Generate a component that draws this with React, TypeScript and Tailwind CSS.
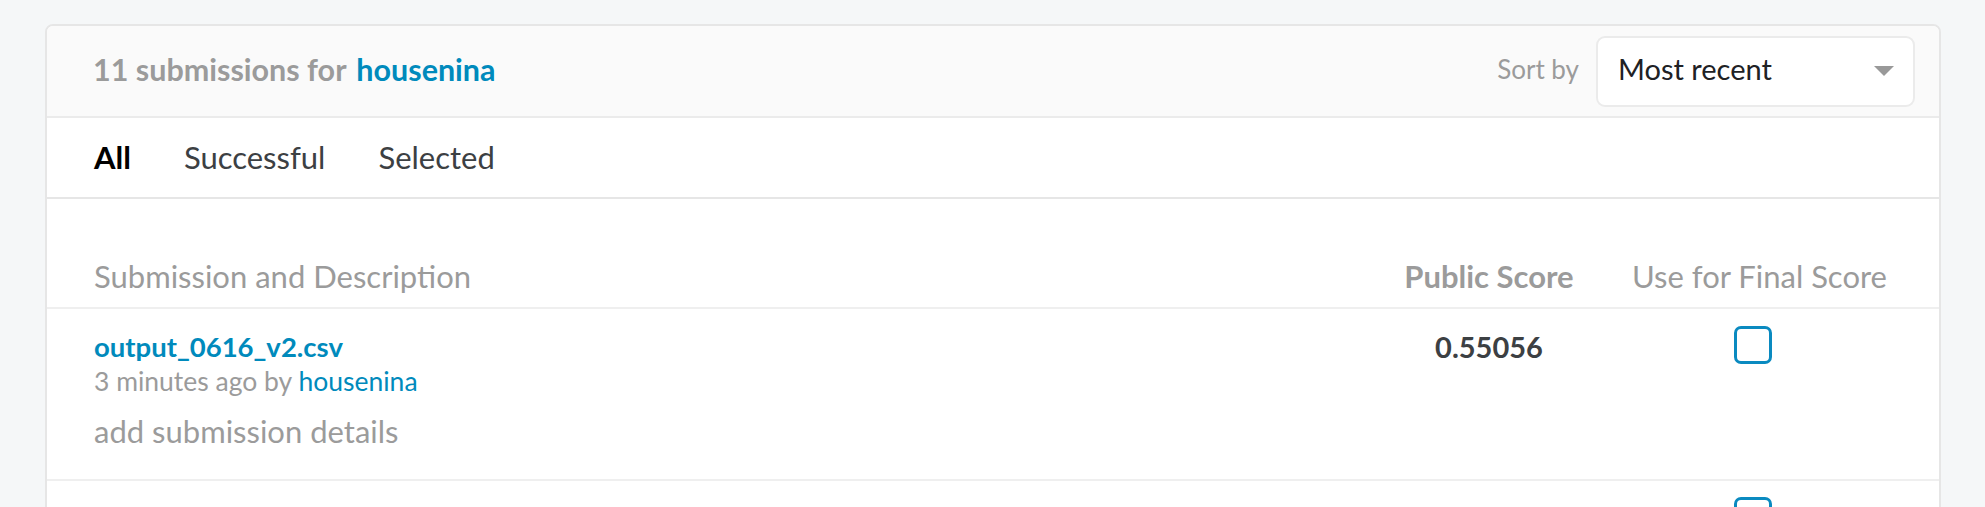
import React from 'react';

const tabs = ['All', 'Successful', 'Selected'];

const submissions = [
    { name: 'output_0616_v2.csv', when: '3 minutes ago', by: 'housenina', desc: 'add submission details', score: '0.55056' },
];

function Checkbox() {
    return <div className="w-[38px] h-[38px] rounded-[7px] border-[3px] border-[#0a8ac0] bg-white mr-[13px]" />;
}

export default function App() {
    return (
        <div className="h-screen overflow-hidden bg-[#f5f7f8] pt-[24px] pl-[45px]" style={{ fontFamily: 'Lato, "Noto Sans", sans-serif' }}>
            <div className="w-[1896px] bg-white border-2 border-[#e6e6e6] rounded-t-[8px] overflow-hidden">
                {/* header */}
                <div className="h-[92px] bg-[#fafafa] flex items-center justify-between pl-[46px] pr-[24px] border-b-2 border-[#ebebeb]">
                    <div className="text-[30.5px] leading-[36px] font-bold text-[#9b9b9b] pb-[5px]">
                        11 submissions for <span className="ml-[3px] text-[#008abc]">housenina</span>
                    </div>
                    <div className="flex items-center gap-[17px]">
                        <span className="text-[26px] leading-[32px] text-[#9b9b9b] pb-[4px]">Sort by</span>
                        <div className="w-[319px] h-[71px] bg-white border-2 border-[#ebebeb] rounded-[9px] flex items-center justify-between pl-[20px] pr-[19px]">
                            <span className="text-[29px] leading-[36px] text-[#202124] pb-[4px]">Most recent</span>
                            <svg width="20" height="10" viewBox="0 0 20 10">
                                <polygon points="0,0 20,0 10,10" fill="#999999" />
                            </svg>
                        </div>
                    </div>
                </div>

                {/* tabs */}
                <div className="h-[81px] flex items-start gap-[53px] pl-[47px] pt-[21px] border-b-2 border-[#e6e6e6]">
                    {tabs.map((t, i) => (
                        <span key={t} className={`text-[31px] leading-[36px] ${i === 0 ? 'font-bold text-black' : 'text-[#3c4043]'}`}>
                            {t}
                        </span>
                    ))}
                </div>

                {/* column headers */}
                <div className="grid grid-cols-[1fr_230px_311px] pl-[47px] pr-[24px] pt-[59px] pb-[13px] border-b-2 border-[#efefef]">
                    <span className="text-[31px] leading-[36px] text-[#9b9b9b]">Submission and Description</span>
                    <span className="text-[31px] leading-[36px] font-bold text-[#9b9b9b] text-center">Public Score</span>
                    <span className="text-[31px] leading-[36px] text-[#9b9b9b] text-center">Use for Final Score</span>
                </div>

                {/* rows */}
                {submissions.map((s) => (
                    <div key={s.name} className="grid grid-cols-[1fr_230px_311px] pl-[47px] pr-[24px] h-[172px] border-b-2 border-[#efefef]">
                        <div className="pt-[21px] flex flex-col">
                            <span className="text-[27.5px] leading-[34px] font-bold text-[#008abc]">{s.name}</span>
                            <span className="mt-[1px] text-[26.5px] leading-[32px] text-[#9b9b9b]">
                                {s.when} by <span className="text-[#008abc]">{s.by}</span>
                            </span>
                            <span className="mt-[16px] text-[31px] leading-[36px] text-[#9b9b9b]">{s.desc}</span>
                        </div>
                        <div className="pt-[21px] text-center text-[29px] leading-[34px] font-bold text-[#3c4043]">{s.score}</div>
                        <div className="pt-[17px] flex justify-center">
                            <Checkbox />
                        </div>
                    </div>
                ))}

                {/* next row, only its checkbox reaches into view */}
                <div className="grid grid-cols-[1fr_230px_311px] pl-[47px] pr-[24px] h-[172px]">
                    <div />
                    <div />
                    <div className="pt-[16px] flex justify-center">
                        <Checkbox />
                    </div>
                </div>
            </div>
        </div>
    );
}
